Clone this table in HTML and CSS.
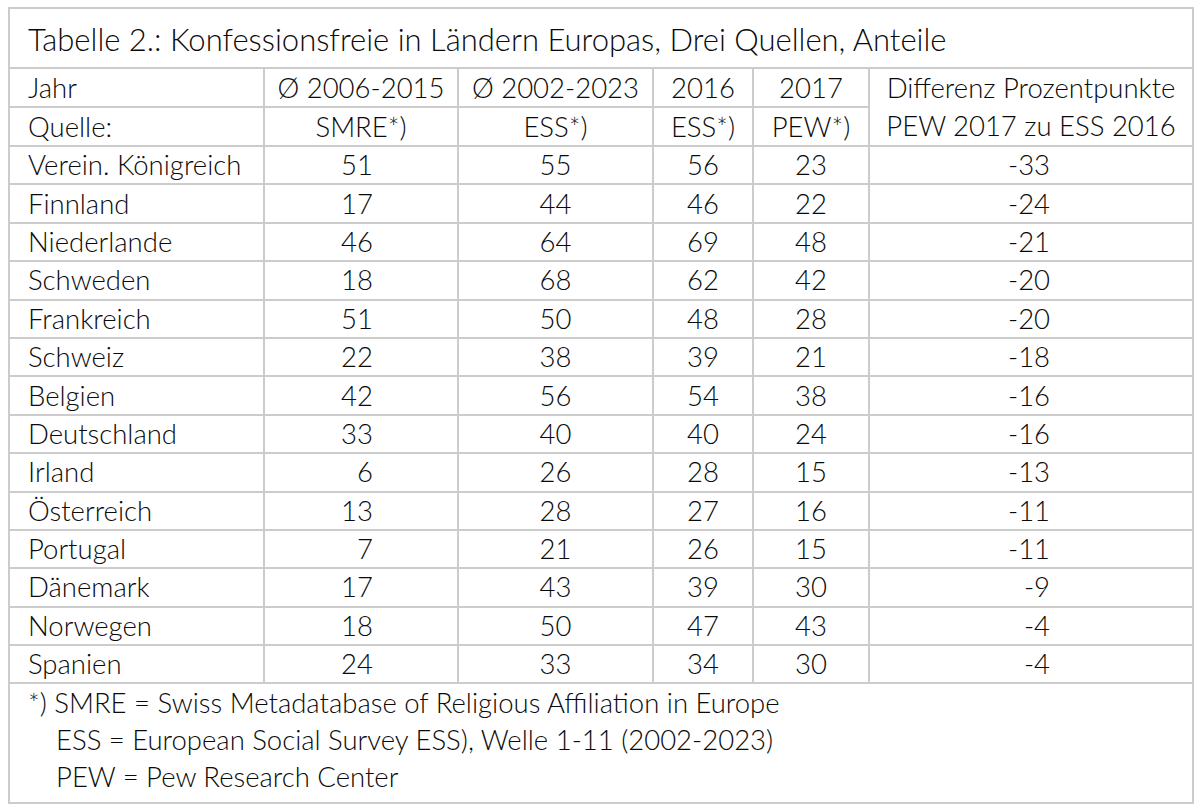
FILE: index.html
```html
<!DOCTYPE html>
<html lang="de">
<head>
<meta charset="utf-8">
<title>Tabelle 2</title>
<link rel="stylesheet" href="styles.css">
</head>
<body>
<table class="tbl">
  <colgroup>
    <col class="c1"><col class="c2"><col class="c3"><col class="c4"><col class="c5"><col class="c6">
  </colgroup>
  <tr class="title-row"><td colspan="6" class="title">Tabelle 2.: Konfessionsfreie in Ländern Europas, Drei Quellen, Anteile</td></tr>
  <tr class="row"><td class="name">Jahr</td><td class="ctr">Ø 2006-2015</td><td class="ctr">Ø 2002-2023</td><td class="ctr">2016</td><td class="ctr">2017</td><td class="ctr diffhead" rowspan="2">Differenz Prozentpunkte<br>PEW 2017 zu ESS 2016</td></tr>
  <tr class="row"><td class="name">Quelle:</td><td class="ctr">SMRE*)</td><td class="ctr">ESS*)</td><td class="ctr">ESS*)</td><td class="ctr">PEW*)</td></tr>
  <tr class="row"><td class="name">Verein. Königreich</td><td class="n1">51</td><td class="ctr">55</td><td class="ctr">56</td><td class="ctr">23</td><td class="n6">-33</td></tr>
  <tr class="row"><td class="name">Finnland</td><td class="n1">17</td><td class="ctr">44</td><td class="ctr">46</td><td class="ctr">22</td><td class="n6">-24</td></tr>
  <tr class="row"><td class="name">Niederlande</td><td class="n1">46</td><td class="ctr">64</td><td class="ctr">69</td><td class="ctr">48</td><td class="n6">-21</td></tr>
  <tr class="row"><td class="name">Schweden</td><td class="n1">18</td><td class="ctr">68</td><td class="ctr">62</td><td class="ctr">42</td><td class="n6">-20</td></tr>
  <tr class="row"><td class="name">Frankreich</td><td class="n1">51</td><td class="ctr">50</td><td class="ctr">48</td><td class="ctr">28</td><td class="n6">-20</td></tr>
  <tr class="row"><td class="name">Schweiz</td><td class="n1">22</td><td class="ctr">38</td><td class="ctr">39</td><td class="ctr">21</td><td class="n6">-18</td></tr>
  <tr class="row"><td class="name">Belgien</td><td class="n1">42</td><td class="ctr">56</td><td class="ctr">54</td><td class="ctr">38</td><td class="n6">-16</td></tr>
  <tr class="row"><td class="name">Deutschland</td><td class="n1">33</td><td class="ctr">40</td><td class="ctr">40</td><td class="ctr">24</td><td class="n6">-16</td></tr>
  <tr class="row"><td class="name">Irland</td><td class="n1">6</td><td class="ctr">26</td><td class="ctr">28</td><td class="ctr">15</td><td class="n6">-13</td></tr>
  <tr class="row"><td class="name">Österreich</td><td class="n1">13</td><td class="ctr">28</td><td class="ctr">27</td><td class="ctr">16</td><td class="n6">-11</td></tr>
  <tr class="row"><td class="name">Portugal</td><td class="n1">7</td><td class="ctr">21</td><td class="ctr">26</td><td class="ctr">15</td><td class="n6">-11</td></tr>
  <tr class="row"><td class="name">Dänemark</td><td class="n1">17</td><td class="ctr">43</td><td class="ctr">39</td><td class="ctr">30</td><td class="n6">-9</td></tr>
  <tr class="row"><td class="name">Norwegen</td><td class="n1">18</td><td class="ctr">50</td><td class="ctr">47</td><td class="ctr">43</td><td class="n6">-4</td></tr>
  <tr class="row"><td class="name">Spanien</td><td class="n1">24</td><td class="ctr">33</td><td class="ctr">34</td><td class="ctr">30</td><td class="n6">-4</td></tr>
  <tr class="foot-row"><td colspan="6" class="foot">
    <div class="fl">*) SMRE = Swiss Metadatabase of Religious Affiliation in Europe</div>
    <div class="fl indent">ESS = European Social Survey ESS), Welle 1-11 (2002-2023)</div>
    <div class="fl indent">PEW = Pew Research Center</div>
  </td></tr>
</table>
</body>
</html>
```

FILE: styles.css
```css
html, body {
  margin: 0;
  padding: 0;
  background: #ffffff;
}
body {
  padding: 7px 8px 0 8px;
  font-family: Lato, "Open Sans", sans-serif;
  font-weight: 300;
  color: #0a0a0a;
}
.tbl {
  border-collapse: collapse;
  width: 1184px;
  table-layout: fixed;
  border: 2px solid #cccccc;
}
.c1 { width: 255px; }
.c2 { width: 194px; }
.c3 { width: 195px; }
.c4 { width: 100px; }
.c5 { width: 116px; }
.c6 { width: 324px; }
.tbl td {
  border: 2px solid #cccccc;
  padding: 0;
  font-size: 27.5px;
  line-height: 30px;
  white-space: nowrap;
}
.title-row td {
  height: 56px;
}
.title {
  font-size: 31px !important;
  padding-left: 18px !important;
  padding-top: 2px !important;
}
.row td {
  height: 36.4px;
}
.name {
  padding-left: 18px !important;
}
.ctr {
  text-align: center;
}
.n1 {
  text-align: right;
  padding-right: 84px !important;
}
.n6 {
  text-align: right;
  padding-right: 142px !important;
}
.diffhead {
  line-height: 38px !important;
}
.foot {
  height: 118px;
  vertical-align: top;
  padding: 0 0 0 18px !important;
}
.fl {
  line-height: 37px;
}
.indent {
  padding-left: 28px;
}
```
